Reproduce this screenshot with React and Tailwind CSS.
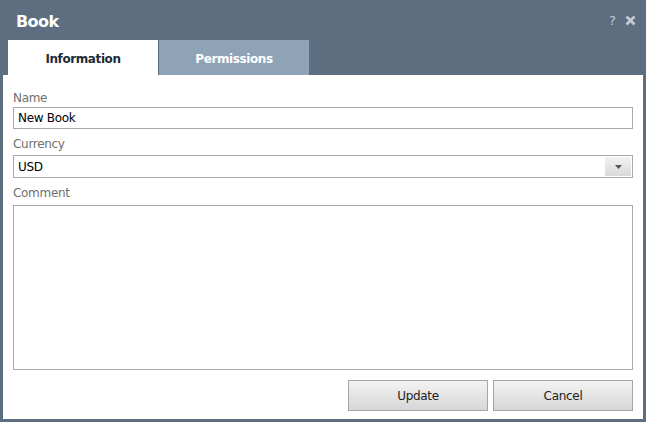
export default function App() {
  const font = { fontFamily: '"DejaVu Sans", Verdana, sans-serif' };
  return (
    <div className="w-[646px] h-[422px] bg-[#5c6e80] flex flex-col" style={font}>
      <div className="h-[40px] flex items-center justify-between pl-[16px] pr-[10px]">
        <span className="text-white font-bold text-[16px] tracking-[-0.6px] mt-[3px]">Book</span>
        <div className="flex items-center gap-[9px] text-[#c3ccd5] mt-[1px]">
          <span className="text-[13px]">?</span>
          <svg width="11" height="11" viewBox="0 0 11 11">
            <path d="M1.5 1.5 L9.5 9.5 M9.5 1.5 L1.5 9.5" stroke="#c3ccd5" strokeWidth="2.8" strokeLinecap="butt" />
          </svg>
        </div>
      </div>
      <div className="flex pl-[8px] h-[35px]">
        <div className="w-[150px] bg-white flex items-center justify-center text-[12px] font-bold text-[#1e2a36] tracking-[-0.4px] pt-[3px]">
          Information
        </div>
        <div className="w-[150px] ml-[1px] bg-[#8fa3b6] flex items-center justify-center text-[12px] font-bold text-white tracking-[-0.4px] pt-[3px]">
          Permissions
        </div>
      </div>
      <div className="mx-[3px] bg-white h-[344px] flex flex-col px-[10px]">
        <div className="h-[32px] flex items-end pb-0 text-[12px] text-[#707070] tracking-[-0.3px]">Name</div>
        <div className="h-[22px] border border-[#a9a9a9] flex items-center px-[4px] text-[12px] text-black tracking-[-0.3px]">New Book</div>
        <div className="h-[26px] flex items-end pb-[2px] text-[12px] text-[#707070] tracking-[-0.3px]">Currency</div>
        <div className="h-[23px] border border-[#a9a9a9] flex items-center justify-between pl-[4px] pr-[1px] text-[12px] text-black tracking-[-0.3px]">
          <span>USD</span>
          <div className="w-[26px] h-[19px] bg-gradient-to-b from-[#f2f2f2] to-[#d9d9d9] flex items-center justify-center">
            <svg width="7" height="4" viewBox="0 0 7 4"><path d="M0 0 H7 L3.5 4 Z" fill="#555" /></svg>
          </div>
        </div>
        <div className="h-[27px] flex items-end pb-[3px] text-[12px] text-[#707070] tracking-[-0.3px]">Comment</div>
        <div className="h-[165px] border border-[#a9a9a9]"></div>
        <div className="flex justify-end gap-[5px] mt-[10px]">
          <button className="w-[140px] h-[31px] border border-[#a6a6a6] bg-gradient-to-b from-[#f3f3f3] to-[#d6d6d6] text-[12px] text-[#222] tracking-[-0.3px]">Update</button>
          <button className="w-[140px] h-[31px] border border-[#a6a6a6] bg-gradient-to-b from-[#f3f3f3] to-[#d6d6d6] text-[12px] text-[#222] tracking-[-0.3px]">Cancel</button>
        </div>
      </div>
    </div>
  );
}
